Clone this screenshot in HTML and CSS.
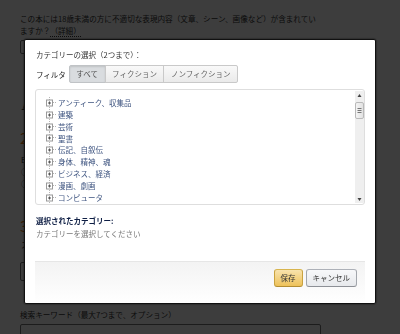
FILE: index.html
```html
<!DOCTYPE html>
<html lang="ja">
<head>
<meta charset="utf-8">
<link rel="stylesheet" href="styles.css">
</head>
<body>
<div class="page">
  <p class="q">この本には18歳未満の方に不適切な表現内容（文章、シーン、画像など）が含まれてい<br>ますか？<a class="more">（詳細）</a></p>
  <div class="field"></div>
  <div class="opt o1">ム</div>
  <h2 class="step">2</h2>
  <div class="opt o2">B</div>
  <div class="opt o3">○</div>
  <div class="opt o3">○</div>
  <h2 class="step step3">3</h2>
  <div class="opt o4">ス</div>
  <div class="field field2"></div>
  <p class="kw">検索キーワード（最大7つまで、オプション）</p>
  <div class="field field3"></div>
</div>

<div class="overlay"></div>

<div class="modal">
  <div class="title">カテゴリーの選択（2つまで）：</div>
  <div class="filter">
    <span class="flabel">フィルタ</span>
    <div class="tabs">
      <span class="tab on">すべて</span>
      <span class="tab">フィクション</span>
      <span class="tab">ノンフィクション</span>
    </div>
  </div>
  <div class="listbox">
    <ul class="tree">
      <li><svg class="tg" viewBox="0 0 12 12" width="12" height="12"><path d="M5.5 0V12M7 5.5H12" stroke="#b5b5b5" stroke-dasharray="1 1" fill="none"/><rect x="2.5" y="3" width="6" height="6" fill="#fff" stroke="#9a9a9a"/><path d="M4 6H7M5.5 4.5V7.5" stroke="#555"/></svg>アンティーク、収集品</li>
      <li><svg class="tg" viewBox="0 0 12 12" width="12" height="12"><path d="M5.5 0V12M7 5.5H12" stroke="#b5b5b5" stroke-dasharray="1 1" fill="none"/><rect x="2.5" y="3" width="6" height="6" fill="#fff" stroke="#9a9a9a"/><path d="M4 6H7M5.5 4.5V7.5" stroke="#555"/></svg>建築</li>
      <li><svg class="tg" viewBox="0 0 12 12" width="12" height="12"><path d="M5.5 0V12M7 5.5H12" stroke="#b5b5b5" stroke-dasharray="1 1" fill="none"/><rect x="2.5" y="3" width="6" height="6" fill="#fff" stroke="#9a9a9a"/><path d="M4 6H7M5.5 4.5V7.5" stroke="#555"/></svg>芸術</li>
      <li><svg class="tg" viewBox="0 0 12 12" width="12" height="12"><path d="M5.5 0V12M7 5.5H12" stroke="#b5b5b5" stroke-dasharray="1 1" fill="none"/><rect x="2.5" y="3" width="6" height="6" fill="#fff" stroke="#9a9a9a"/><path d="M4 6H7M5.5 4.5V7.5" stroke="#555"/></svg>聖書</li>
      <li><svg class="tg" viewBox="0 0 12 12" width="12" height="12"><path d="M5.5 0V12M7 5.5H12" stroke="#b5b5b5" stroke-dasharray="1 1" fill="none"/><rect x="2.5" y="3" width="6" height="6" fill="#fff" stroke="#9a9a9a"/><path d="M4 6H7M5.5 4.5V7.5" stroke="#555"/></svg>伝記、自叙伝</li>
      <li><svg class="tg" viewBox="0 0 12 12" width="12" height="12"><path d="M5.5 0V12M7 5.5H12" stroke="#b5b5b5" stroke-dasharray="1 1" fill="none"/><rect x="2.5" y="3" width="6" height="6" fill="#fff" stroke="#9a9a9a"/><path d="M4 6H7M5.5 4.5V7.5" stroke="#555"/></svg>身体、精神、魂</li>
      <li><svg class="tg" viewBox="0 0 12 12" width="12" height="12"><path d="M5.5 0V12M7 5.5H12" stroke="#b5b5b5" stroke-dasharray="1 1" fill="none"/><rect x="2.5" y="3" width="6" height="6" fill="#fff" stroke="#9a9a9a"/><path d="M4 6H7M5.5 4.5V7.5" stroke="#555"/></svg>ビジネス、経済</li>
      <li><svg class="tg" viewBox="0 0 12 12" width="12" height="12"><path d="M5.5 0V12M7 5.5H12" stroke="#b5b5b5" stroke-dasharray="1 1" fill="none"/><rect x="2.5" y="3" width="6" height="6" fill="#fff" stroke="#9a9a9a"/><path d="M4 6H7M5.5 4.5V7.5" stroke="#555"/></svg>漫画、劇画</li>
      <li><svg class="tg" viewBox="0 0 12 12" width="12" height="12"><path d="M5.5 0V12M7 5.5H12" stroke="#b5b5b5" stroke-dasharray="1 1" fill="none"/><rect x="2.5" y="3" width="6" height="6" fill="#fff" stroke="#9a9a9a"/><path d="M4 6H7M5.5 4.5V7.5" stroke="#555"/></svg>コンピュータ</li>
    </ul>
    <div class="sbar">
      <svg class="arr" viewBox="0 0 9 7" width="9" height="7"><path d="M2.5 5H6.5L4.5 2Z" fill="#444"/></svg>
      <div class="thumb"><svg viewBox="0 0 9 17" width="9" height="17"><path d="M2.5 6.5H6.5M2.5 8.5H6.5M2.5 10.5H6.5" stroke="#777" stroke-width="1"/></svg></div>
      <div class="track"></div>
      <svg class="arr" viewBox="0 0 9 7" width="9" height="7"><path d="M2.5 2H6.5L4.5 5Z" fill="#444"/></svg>
    </div>
  </div>
  <div class="sel-label">選択されたカテゴリー:</div>
  <div class="sel-none">カテゴリーを選択してください</div>
  <div class="footer">
    <button class="btn primary">保存</button>
    <button class="btn">キャンセル</button>
  </div>
</div>
</body>
</html>
```

FILE: styles.css
```css
* { box-sizing: border-box; }
html, body {
  margin: 0;
  padding: 0;
  width: 400px;
  height: 334px;
  overflow: hidden;
  background: #fff;
  font-family: "Noto Sans CJK JP", "Noto Sans", sans-serif;
  color: #333;
}
.page {
  padding: 13px 20px 0 20px;
  font-size: 7.6px;
  line-height: 12px;
  display: flex;
  flex-direction: column;
  align-items: flex-start;
}
.q {
  margin: 0;
}
.more {
  color: #333;
  border-bottom: 1px dotted #333;
}
.field {
  margin-top: 3px;
  width: 300px;
  height: 14px;
  flex: none;
  border: 1px solid #777;
  border-radius: 2px;
}
.opt {
  font-size: 8px;
  line-height: 11px;
  padding-left: 1px;
}
.o1 { margin-top: 47px; }
.o2 { margin-top: 8px; }
.o3 { margin-top: 1px; }
.o4 { margin-top: 5px; }
.step {
  margin: 18px 0 0;
  font-size: 15px;
  line-height: 16px;
  color: #e47911;
  font-weight: normal;
}
.step3 { margin-top: 29px; }
.field2 { margin-top: 12px; height: 19px; width: 200px; }
.kw {
  margin: 28px 0 0;
  font-size: 7.6px;
  line-height: 12px;
}
.field3 { margin-top: 3px; width: 301px; height: 20px; }

.overlay {
  position: fixed;
  inset: 0;
  background: rgba(0, 0, 0, 0.76);
}

.modal {
  position: fixed;
  left: 24px;
  top: 39px;
  width: 352px;
  height: 265px;
  background: #fff;
  border: 1px solid #111;
  border-radius: 2px;
  box-shadow: 0 0 2px rgba(0, 0, 0, 0.8);
  padding: 9px 10px 0 10px;
  display: flex;
  flex-direction: column;
  font-size: 7.5px;
  color: #333;
}
.title {
  line-height: 12px;
  padding-left: 1px;
}
.filter {
  margin-top: 4px;
  display: flex;
  align-items: center;
  gap: 3px;
  padding-left: 1px;
}
.flabel { color: #222; }
.tabs { display: flex; }
.tab {
  height: 18px;
  line-height: 16px;
  padding: 0 6.5px;
  border: 1px solid #c9c9c9;
  background: linear-gradient(#f9f9f9, #eaeaea);
  color: #666;
  margin-left: -1px;
}
.tab:first-child { border-radius: 2px 0 0 2px; margin-left: 0; }
.tab:last-child { border-radius: 0 2px 2px 0; }
.tab.on {
  background: #d9dcdf;
  box-shadow: inset 0 1px 2px rgba(0, 0, 0, 0.12);
  border-color: #c0c3c6;
  color: #555;
}
.listbox {
  margin-top: 6px;
  height: 116px;
  border: 1px solid #dedede;
  border-radius: 3px;
  display: flex;
  overflow: hidden;
}
.tree {
  flex: 1;
  margin: 0;
  padding: 7px 0 0 8px;
  list-style: none;
}
.tree li {
  display: flex;
  align-items: center;
  height: 11.85px;
  line-height: 11.85px;
  color: #3f5580;
}
.tg { flex: none; margin-right: 2px; }
.sbar {
  width: 9px;
  margin: 1px 0 1px 0;
  background: #efefef;
  display: flex;
  flex-direction: column;
  align-items: stretch;
}
.arr { display: block; margin-top: 1px; }
.thumb {
  height: 17px;
  margin-top: 3px;
  border: 1px solid #b9b9b9;
  border-radius: 2px;
  background: linear-gradient(90deg, #f4f4f4, #e2e2e2);
  display: flex;
  justify-content: center;
  align-items: center;
}
.thumb svg { display: block; margin: -1px; }
.track { flex: 1; }
.sel-label {
  margin-top: 9px;
  line-height: 13px;
  color: #0f1f45;
  font-weight: bold;
  padding-left: 1px;
}
.sel-none {
  line-height: 13px;
  color: #777;
  padding-left: 1px;
}
.footer {
  margin-top: 21px;
  flex: 1;
  border-top: 1px solid #e6e6e6;
  background: linear-gradient(#f3f3f3, #ffffff);
  display: flex;
  justify-content: flex-end;
  align-items: flex-start;
  gap: 3px;
  padding: 7px 8px 0 0;
}
.btn {
  height: 18px;
  padding: 0 6px;
  font-family: inherit;
  font-size: 7.5px;
  line-height: 16px;
  border-radius: 3px;
  border: 1px solid #adb1b8;
  border-color: #adb1b8 #a2a6ac #8d9096;
  background: linear-gradient(#f7f8fa, #e7e9ec);
  color: #333;
  margin: 0;
}
.btn.primary {
  border-color: #d8b54f #c9a23f #b38d32;
  background: linear-gradient(#f8e3ad, #eec25a);
  color: #333;
}
```
